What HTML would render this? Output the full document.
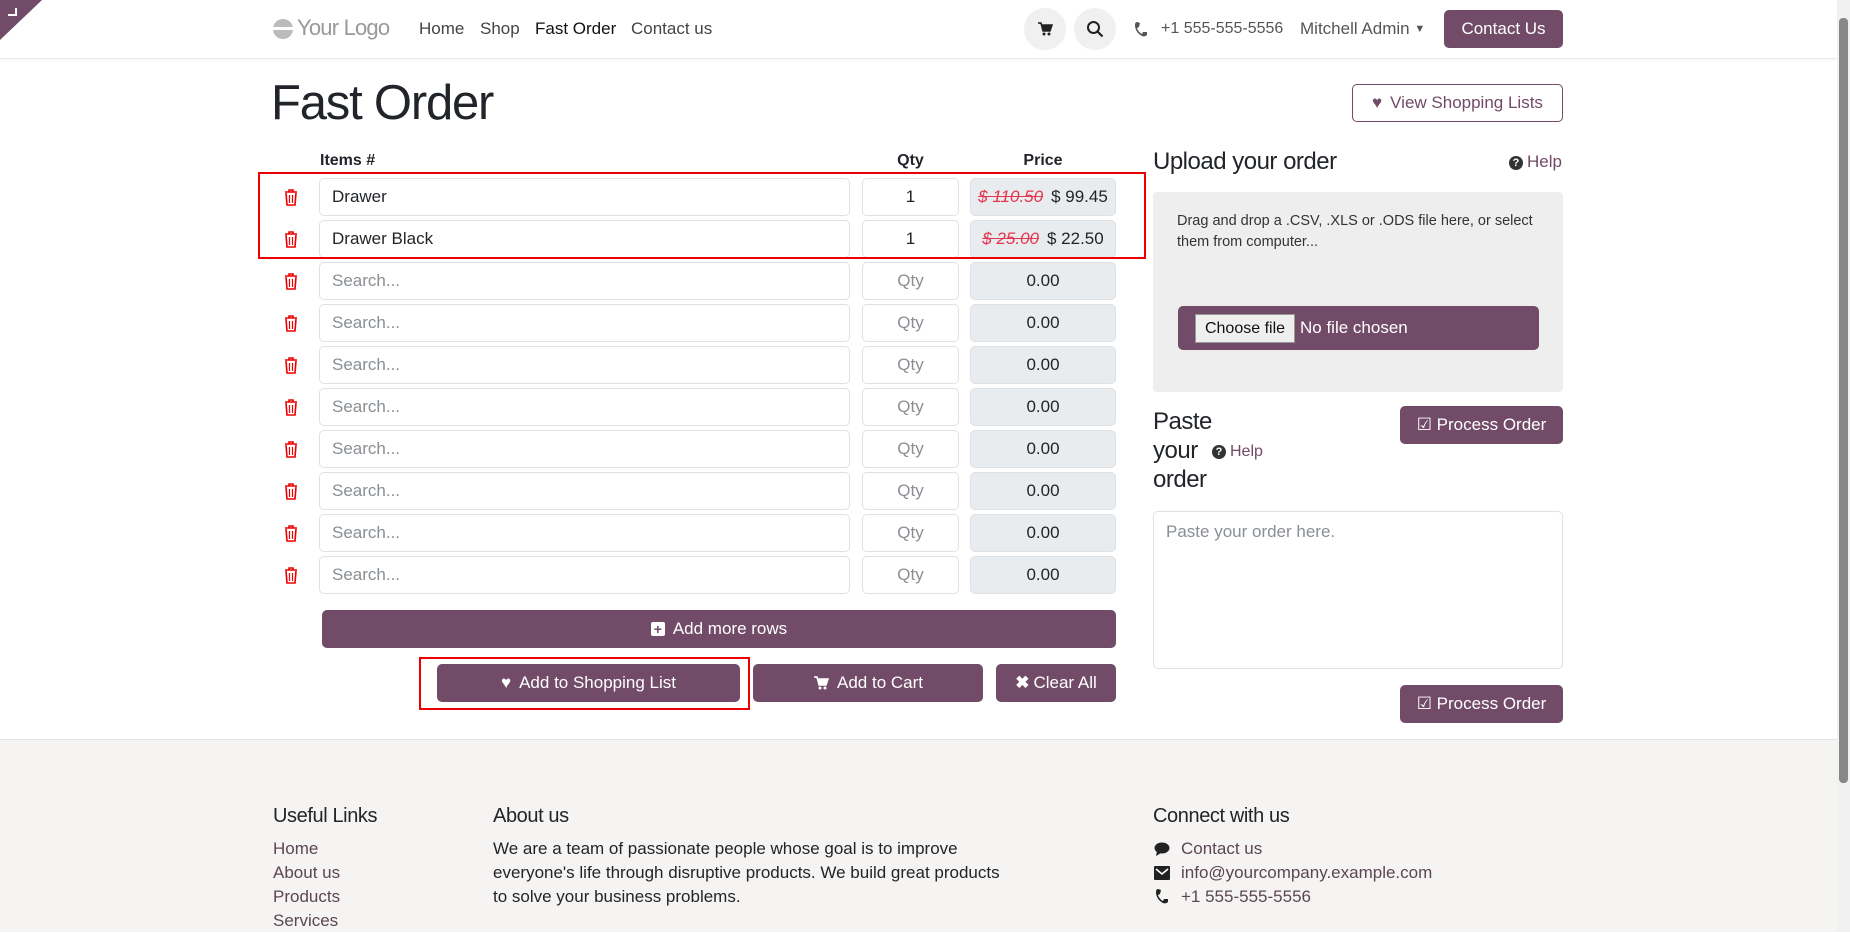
<!DOCTYPE html>
<html><head><meta charset="utf-8"><style>
*{box-sizing:border-box;margin:0;padding:0}
body{width:1850px;height:932px;overflow:hidden;background:#fff;font-family:"Liberation Sans",sans-serif;color:#212529;position:relative;font-size:17px}
.a{position:absolute}
.btn{position:absolute;background:#714b67;color:#fff;border-radius:5px;display:flex;align-items:center;justify-content:center;font-size:17px;gap:8px}
.inp{position:absolute;border:1px solid #dee2e6;border-radius:5px;height:38px;display:flex;align-items:center;font-size:17px;background:#fff}
.pr{background:#e9ecef;justify-content:center}
.ph{color:#8a8f94}
.q{display:inline-block;width:14px;height:14px;border-radius:50%;background:#714b67;color:#fff;font-size:11px;line-height:14px;text-align:center;font-weight:bold;vertical-align:1px;margin-right:4px}
</style></head><body>
<svg class="a" style="left:0;top:0" width="42" height="40"><polygon points="0,0 42,0 0,40" fill="#714b67"/><path d="M16 8v7h-8" stroke="#fff" stroke-width="2" fill="none"/></svg>
<div class="a" style="left:0;top:0;width:1837px;height:59px;border-bottom:1px solid #e9e9e9;box-shadow:0 1px 3px rgba(0,0,0,.05)"></div>
<svg class="a" style="left:273px;top:18px" width="20" height="22"><circle cx="10" cy="11" r="10" fill="#bbb"/><rect x="0" y="9" width="20" height="3" fill="#fff"/></svg>
<div class="a" style="left:297px;top:15px;font-size:22px;color:#999;letter-spacing:-.8px">Your Logo</div>
<div class="a" style="left:419px;top:19px;font-size:17px;color:#444">Home</div>
<div class="a" style="left:480px;top:19px;font-size:17px;color:#444">Shop</div>
<div class="a" style="left:535px;top:19px;font-size:17px;color:#111">Fast Order</div>
<div class="a" style="left:631px;top:19px;font-size:17px;color:#444">Contact us</div>
<div class="a" style="left:1024px;top:8px;width:42px;height:42px;border-radius:50%;background:#f0f0f0"></div>
<svg class="a" style="left:1037px;top:21px" width="16" height="16" viewBox="0 0 16 16"><path d="M1 2h3l2 8h7l2-6H5" fill="#222" stroke="#222" stroke-width="1.5"/><circle cx="7" cy="13" r="1.5" fill="#222"/><circle cx="12" cy="13" r="1.5" fill="#222"/></svg>
<div class="a" style="left:1074px;top:8px;width:42px;height:42px;border-radius:50%;background:#f0f0f0"></div>
<svg class="a" style="left:1086px;top:20px" width="18" height="18"><circle cx="7.5" cy="7.5" r="5.5" stroke="#222" stroke-width="2" fill="none"/><path d="M11.5 11.5l5 5" stroke="#222" stroke-width="2.2"/></svg>
<svg class="a" style="left:1134px;top:21px" width="14" height="16" viewBox="0 0 14 16"><path d="M3 1l3 1-1 4-2 1c1 3 3 5 5 6l1-2 4 0 0 3c-1 1-3 2-5 1C4 13 1 9 1 4 1 2 2 1 3 1z" fill="#555"/></svg>
<div class="a" style="left:1161px;top:20px;font-size:16px;color:#555">+1 555-555-5556</div>
<div class="a" style="left:1300px;top:19px;font-size:17px;color:#555">Mitchell Admin <span style="font-size:11px;vertical-align:2px">▼</span></div>
<div class="btn" style="left:1444px;top:10px;width:119px;height:38px">Contact Us</div>
<div class="a" style="left:271px;top:75px;font-size:49px;letter-spacing:-1.2px">Fast Order</div>
<div class="a" style="left:1352px;top:84px;width:211px;height:38px;border:1px solid #714b67;border-radius:5px;color:#714b67;display:flex;align-items:center;justify-content:center;gap:8px;font-size:17px"><span>♥</span>View Shopping Lists</div>
<div class="a" style="left:320px;top:152px;font-weight:bold;font-size:16px">Items #</div>
<div class="a" style="left:862px;width:97px;top:152px;font-weight:bold;font-size:16px;text-align:center">Qty</div>
<div class="a" style="left:970px;width:146px;top:152px;font-weight:bold;font-size:16px;text-align:center">Price</div>
<div id="rows"></div>
<script>
var r=document.getElementById('rows'),h='';
var data=[['Drawer','1','110.50','99.45'],['Drawer Black','1','25.00','22.50']];
for(var i=0;i<10;i++){var y=178+i*42;var d=data[i];
h+='<svg class="a" style="left:283px;top:'+(y+11)+'px" width="16" height="17" viewBox="0 0 16 17"><path d="M2 3h12M6 3V1h4v2M3 4l1 12h8l1-12" stroke="#e00" stroke-width="1.6" fill="none"/><path d="M6.5 6v8M9.5 6v8" stroke="#e00" stroke-width="1.2"/></svg>';
h+='<div class="inp'+(d?'':' ph')+'" style="left:319px;top:'+y+'px;width:531px;padding-left:12px">'+(d?d[0]:'Search...')+'</div>';
h+='<div class="inp'+(d?'':' ph')+'" style="left:862px;top:'+y+'px;width:97px;justify-content:center">'+(d?d[1]:'Qty')+'</div>';
h+='<div class="inp pr" style="left:970px;top:'+y+'px;width:146px">'+(d?'<i style="color:#e4374f;text-decoration:line-through;margin-right:8px">$ '+d[2]+'</i>$ '+d[3]:'0.00')+'</div>';}
r.innerHTML=h;
</script>
<div class="a" style="left:258px;top:172px;width:888px;height:87px;border:2px solid #e00"></div>
<div class="btn" style="left:322px;top:610px;width:794px;height:38px"><span style="display:inline-block;width:14px;height:14px;background:#fff;border-radius:2px;color:#714b67;font-size:14px;line-height:14px;text-align:center;font-weight:bold">+</span>Add more rows</div>
<div class="btn" style="left:437px;top:664px;width:303px;height:38px"><span>♥</span>Add to Shopping List</div>
<div class="btn" style="left:753px;top:664px;width:230px;height:38px"><svg width="16" height="16" viewBox="0 0 16 16"><path d="M1 2h3l2 8h7l2-6H5" fill="#fff" stroke="#fff" stroke-width="1.5"/><circle cx="7" cy="13" r="1.5" fill="#fff"/><circle cx="12" cy="13" r="1.5" fill="#fff"/></svg>Add to Cart</div>
<div class="btn" style="left:996px;top:664px;width:120px;height:38px;gap:4px"><b>✖</b>Clear All</div>
<div class="a" style="left:419px;top:657px;width:331px;height:53px;border:2px solid #e00"></div>
<div class="a" style="left:1153px;top:148px;font-size:24px;letter-spacing:-.5px">Upload your order</div>
<div class="a" style="left:1509px;top:152px;font-size:17px;color:#714b67"><span class="q" style="background:#333">?</span>Help</div>
<div class="a" style="left:1153px;top:192px;width:410px;height:200px;background:#eee;border-radius:4px"></div>
<div class="a" style="left:1177px;top:211px;width:370px;font-size:14.5px;line-height:21px;color:#333">Drag and drop a .CSV, .XLS or .ODS file here, or select them from computer...</div>
<div class="a" style="left:1178px;top:306px;width:361px;height:44px;background:#714b67;border-radius:5px"></div>
<div class="a" style="left:1195px;top:314px;width:100px;height:29px;background:#efefef;border:1px solid #999;font-size:16px;display:flex;align-items:center;justify-content:center;color:#111">Choose file</div>
<div class="a" style="left:1300px;top:318px;font-size:17px;color:#fff">No file chosen</div>
<div class="a" style="left:1153px;top:407px;font-size:24px;line-height:29px;letter-spacing:-.5px">Paste<br>your<br>order</div>
<div class="a" style="left:1212px;top:443px;font-size:16px;color:#714b67"><span class="q" style="background:#333">?</span>Help</div>
<div class="btn" style="left:1400px;top:406px;width:163px;height:38px">☑ Process Order</div>
<div class="a" style="left:1153px;top:511px;width:410px;height:158px;border:1px solid #dee2e6;border-radius:5px;padding:10px 12px;color:#8a8f94;font-size:17px">Paste your order here.</div>
<div class="btn" style="left:1400px;top:685px;width:163px;height:38px">☑ Process Order</div>
<div class="a" style="left:0;top:739px;width:1837px;height:193px;background:#f6f4f2;border-top:1px solid #e3e3e3"></div>
<div class="a" style="left:273px;top:805px;font-size:20px;letter-spacing:-.4px">Useful Links</div>
<div class="a" style="left:273px;top:837px;font-size:17px;line-height:24px;color:#5a4654">Home<br>About us<br>Products<br>Services</div>
<div class="a" style="left:493px;top:805px;font-size:20px;letter-spacing:-.4px">About us</div>
<div class="a" style="left:493px;top:837px;font-size:17px;line-height:24px;width:515px">We are a team of passionate people whose goal is to improve everyone's life through disruptive products. We build great products to solve your business problems.</div>
<div class="a" style="left:1153px;top:805px;font-size:20px;letter-spacing:-.4px">Connect with us</div>
<svg class="a" style="left:1154px;top:841px" width="16" height="16" viewBox="0 0 16 16"><ellipse cx="8" cy="7" rx="7.5" ry="5.5" fill="#222"/><path d="M3 10l-1 5 5-3z" fill="#222"/></svg>
<svg class="a" style="left:1154px;top:866px" width="16" height="14" viewBox="0 0 16 14"><rect x="0" y="0" width="16" height="14" rx="1" fill="#222"/><path d="M2 3l6 5 6-5" stroke="#fff" stroke-width="1.6" fill="none"/></svg>
<svg class="a" style="left:1155px;top:888px" width="14" height="16" viewBox="0 0 14 16"><path d="M3 1l3 1-1 4-2 1c1 3 3 5 5 6l1-2 4 0 0 3c-1 1-3 2-5 1C4 13 1 9 1 4 1 2 2 1 3 1z" fill="#222"/></svg>
<div class="a" style="left:1181px;top:837px;font-size:17px;line-height:24px;color:#5a4654">Contact us<br>info@yourcompany.example.com<br>+1 555-555-5556</div>
<div class="a" style="left:1837px;top:0;width:13px;height:932px;background:#f1f1f1"></div>
<div class="a" style="left:1839px;top:18px;width:9px;height:765px;background:#888;border-radius:4px"></div>
</body></html>
